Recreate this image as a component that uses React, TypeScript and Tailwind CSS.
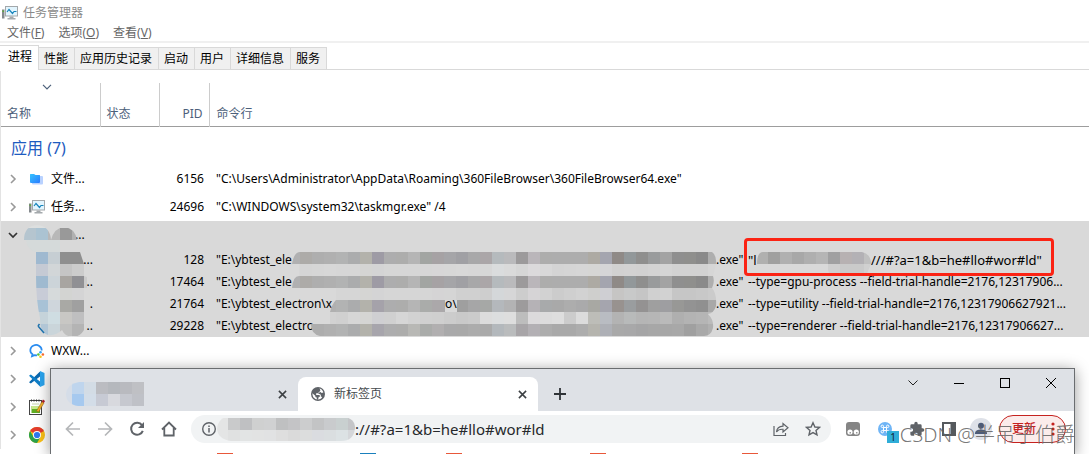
import React from "react";

const uiFont = "font-['Noto_Sans','Noto_Sans_CJK_SC',sans-serif]";

const tabs = ["进程", "性能", "应用历史记录", "启动", "用户", "详细信息", "服务"];

const menus = [
  { label: "文件", key: "F" },
  { label: "选项", key: "O" },
  { label: "查看", key: "V" },
];

function MonitorIcon() {
  return (
    <svg width="18" height="16" viewBox="0 0 18 16" className="shrink-0">
      <rect x="1" y="4.500" width="2.500" height="9" fill="#84898d" />
      <rect x="1.500" y="5.500" width="1.500" height="1.500" fill="#5fae35" />
      <rect x="4.500" y="1.500" width="12" height="9.500" fill="#e2f5fe" stroke="#a3a8ab" />
      <path d="M6 7L8 4.500L11.500 8.500L13 6.500H15.500" fill="none" stroke="#1684bb" strokeWidth="1.200" />
      <path d="M8.500 11.500h4v1.500h2v1.500H6.500v-1.500h2z" fill="#a5aaad" />
    </svg>
  );
}

function FolderIcon() {
  return (
    <svg width="18" height="16" viewBox="0 0 18 16" className="shrink-0">
      <defs>
        <linearGradient id="folder" x1="0" y1="0" x2="1" y2="1">
          <stop offset="0" stopColor="#35c4ff" />
          <stop offset="1" stopColor="#2a7bff" />
        </linearGradient>
      </defs>
      <rect x="4" y="5" width="11" height="8.500" rx="1" fill="#b9d2ff" />
      <path d="M2 3.500q0-.5.5-.5H6l1.500 1H11.500q.5 0 .5.5V11q0 1-1 1H3q-1 0-1-1z" fill="url(#folder)" />
    </svg>
  );
}

function ChatIcon() {
  return (
    <svg width="18" height="16" viewBox="0 0 18 16" className="shrink-0">
      <path d="M13.700 7.500A5.700 5.200 0 1 0 4.500 11.300L4 13.200L6.500 12.100L9 12.300" fill="none" stroke="#2a8cf0" strokeWidth="1.700" />
      <circle cx="12.500" cy="9.300" r="1.300" fill="#35a7f5" />
      <circle cx="14.900" cy="11.500" r="1.300" fill="#f5672e" />
      <circle cx="12.500" cy="13.700" r="1.300" fill="#f8c51c" />
      <circle cx="10.400" cy="11.500" r="1.300" fill="#54c438" />
    </svg>
  );
}

function CodeIcon() {
  return (
    <svg width="18" height="16" viewBox="0 0 18 16" className="shrink-0">
      <path d="M12 0v5.500L2.800 12.500L1 11.300L12 .5z" fill="#0a69b0" />
      <path d="M12 16v-5.500L2.800 3.500L1 4.700L12 15.500z" fill="#0f7fc9" />
      <path d="M12 0L16.500 2v12l-4.500 2z" fill="#2aa4ee" />
    </svg>
  );
}

function NoteIcon() {
  return (
    <svg width="18" height="18" viewBox="0 0 18 18" className="shrink-0">
      <rect x="1.500" y="2.500" width="12" height="14" fill="#fff" stroke="#444" />
      <path d="M3.500 1.500v2M6 1.500v2M8.500 1.500v2M11 1.500v2" stroke="#333" strokeWidth="1" />
      <path d="M4 6h7" stroke="#c4d6a8" />
      <rect x="3.500" y="8" width="8.500" height="7" fill="#5fae22" />
      <rect x="3.500" y="8" width="8.500" height="3" fill="#c9e88c" />
      <path d="M8.500 13L14 3.500L16 5L10.500 14z" fill="#f3b02a" stroke="#8c5a12" strokeWidth=".5" />
      <path d="M13.700 3.500L15 1.500L17 3L15.900 5z" fill="#b3202a" />
    </svg>
  );
}

function ChromeIcon() {
  return (
    <svg width="18" height="16" viewBox="0 0 18 16" className="shrink-0">
      <circle cx="9" cy="8" r="8" fill="#fbc116" />
      <path d="M9 8L2.070 4A8 8 0 0 1 15.930 4z" fill="#e33b2e" />
      <path d="M2.070 4A8 8 0 0 0 9 16L12.460 10L5.540 10z" fill="#2ba24c" />
      <circle cx="9" cy="8" r="4" fill="#fff" />
      <circle cx="9" cy="8" r="3.100" fill="#2f78ee" />
    </svg>
  );
}

function Chevron({ open = false }: { open?: boolean }) {
  return (
    <button type="button" aria-label={open ? "折叠" : "展开"} className="flex size-4 shrink-0 items-center justify-center">
      <svg width="10" height="10" viewBox="0 0 10 10" fill="none">
        {open ? (
          <path d="M1 3l4 4 4-4" stroke="#333" strokeWidth="1.700" />
        ) : (
          <path d="M3 1l4 4-4 4" stroke="#999" strokeWidth="1.600" />
        )}
      </svg>
    </button>
  );
}

type AppRowProps = { icon?: React.ReactNode; name: React.ReactNode; pid?: string; command?: string; open?: boolean };

function AppRow({ icon, name, pid, command, open }: AppRowProps) {
  return (
    <tr className={open ? "h-7 bg-[#d9d9d9]" : "h-7"}>
      <td className="p-0">
        <div className="flex items-center pl-1">
          <Chevron open={open} />
          <span className="ml-[7px] flex w-[23px] shrink-0">{icon}</span>
          <span className="whitespace-nowrap">{name}</span>
        </div>
      </td>
      <td className="p-0" />
      <td className="p-0 pr-[5px] text-right">{pid}</td>
      <td className="p-0 pl-[7px] whitespace-nowrap">{command}</td>
    </tr>
  );
}

type ChildRowProps = { dots: string; pid: string; head: string; middle?: string; args: React.ReactNode };

function ChildRow({ dots, pid, head, middle, args }: ChildRowProps) {
  return (
    <tr className="h-[22px] bg-[#d9d9d9]">
      <td className="p-0 pr-[7px] text-right">{dots}</td>
      <td className="p-0" />
      <td className="p-0 pr-[5px] text-right">{pid}</td>
      <td className="overflow-hidden p-0 pl-[7px]">
        <div className="flex whitespace-pre">
          <span className="w-[229px] shrink-0">{head}</span>
          <span className="w-[271px] shrink-0">{middle}</span>
          <span className="w-8 shrink-0">.exe"</span>
          {args}
        </div>
      </td>
    </tr>
  );
}

const CELL = 12;

function Cells({ x, y, colors }: { x: number; y: number; colors: string }) {
  return (
    <>
      {colors.split(" ").map((c, i) => (
        <rect key={i} x={x + i * CELL} y={y} width={CELL} height={CELL} fill={"#" + c} />
      ))}
    </>
  );
}

const bandDark =
  "b0b0b1 adaba8 aeaeae b0b0b0 b2b3b3 abacad b3b2ab 9e9ba5 adadae adadac b5b5b5 a2a5a2 a6a2a4 a5a5a8 a0a0a4 a8a8a9 aba6a8 b5babd bababc 9c9a9b bab6ba adadac adadad adadad adadad adaaa3 a4a5af 8f8a87 92989a 8f8f8e 999b9c a3a3a3 8f8f8f 8f8f8d 8a8a8a aeaeae";
const bandMid =
  "b0b0b1 adaba8 aeaeae b0b0b0 b2b3b3 abacad b3b2ab a5a2aa adadae adadac b5b5b5 aaacaa aba8aa a9a9aa 9f9f9f a6a6a7 a6a8a6 b4b8bc b3b3b4 9d9b9c b5b2b6 a8aaab a9a9a9 adadad aaaaab a8a8a3 a5a5ae 98928f 9a9d9f 949292 9f9f9f 9e9ea1 989896 939393 909090 a8a8a8";
const bandSoft =
  "b0b0b1 adadad adadad b0b0b0 b2b3b3 abacad b3b2ab a7a5ac adadae adadac b8b8b5 aaacaa b1afb0 a9a9aa a9a9a9 acacac aaaaaa b3b8bc babcbd a8a5a8 b3b0b4 adadad a9a9a9 a9a9a9 adadad b5b4ae aeb0b6 a9a9a9 a8a8a9 a5a5a6 a7a7a7 a7a7a7 a8a8a8 a0a0a0 a9a9a9 b0b0b0";
const lightTop =
  "d6d6d6 d5d5d5 d6d6d6 d7d7d7 d6d6d6 d6d6d6 d5d5d3 d4d4d5 d6d6d6 d6d6d6 d6d6d6 d6d6d6 d7d6d7 d7d7d7 d8d8d8 d7d7d7 d7d7d7 dadcdd dadada d6d6d6 dcdadc d8d8d8 d4d4d4 d5d5d5 d6d6d6 d6d6d4 d5d5d7 d1d1d1 d2d2d2 d1d1d1 d3d3d3 d5d5d5 d2d2d2 d2d2d2 d2d2d2 d6d6d6";
const lightMiddle =
  "d6d6d6 d5d5d5 d6d6d6 d7d7d7 d6d6d6 d6d6d6 d5d5d3 d4d4d5 d6d6d6 d6d6d6 d6d6d6 d6d6d6 d5d4d5 d5d5d5 d0d0d0 d0d0d0 cecece d4d7d9 d6d6d7 cdcdcd d6d4d6 d2d2d2 cccccc cfcfcf d2d2d2 cfcfcd cfcfd3 c6c5c4 c8c9c9 c5c5c5 d0d0d0 d2d2d2 c6c6c6 c6c6c6 c8c8c8 cbcbcb";
const lightBottom =
  "d0d0d0 d0d0d0 d2d2d2 d2d2d2 d0d0d0 d6d6d6 d5d5d3 cfcfd2 d0d0d0 d6d6d6 d2d2d2 d0d0d0 cfcfcf cccccc c9c9c9 cbcbcb dcdcdc dcdedf dedede bdbdbd dcdadc dcdcdc dedede cccccc dcdcdc bdbdb8 b9bcc2 b3b3b3 b8baba b5b5b5 b6b6b6 bababa afafaf b3b3b3 b5b5b5 bbbbbb";

function ProcessMosaic() {
  return (
    <svg
      aria-hidden="true"
      width="880"
      height="120"
      viewBox="0 220 880 120"
      className="pointer-events-none absolute left-0 top-[220px]"
    >
      <defs>
        <clipPath id="names">
          <path d="M24 240Q24 226 37 225Q50 226 51 240zM51 240Q54 228 64 227Q75 228 77 240zM36 252H80L84 264V276L87 277V288H84V330Q80 337 73 337Q65 337 62 330Q56 336 48 335Q40 333 40 318Q36 300 36 276z" />
        </clipPath>
        <clipPath id="paths">
          <path
            clipRule="evenodd"
            d="M292 264Q294 252 300 252H712Q717 256 716 264L713 276Q715 282 712 288Q717 294 716 306Q714 313 708 314Q714 320 713 328Q711 336 704 336H320Q311 334 311 324H330V312Q332 304 336 300V288H292Q293 276 299 276V264zM445 300H457V312H445z"
          />
        </clipPath>
        <clipPath id="argument">
          <path d="M757 264Q757 252 763 252H862Q871 254 871 264L866 276H830L826 264z" />
        </clipPath>
      </defs>
      <path d="M26 240H60V252H36Q27 250 26 240z" fill="#d5dada" />
      <g clipPath="url(#names)">
        <Cells x={24} y={216} colors="dddfdf dddfdf d9d9d9 d9d9d9 d9d9d9" />
        <Cells x={24} y={228} colors="b5c5cf abc3d2 b8b8b8 999999 b0b0b0" />
        <Cells x={36} y={252} colors="9fb9d0 c6ced3 8f8f8f 8f8f8f" />
        <Cells x={36} y={264} colors="c5cad4 d2d6d8 c5c5c5 cccccc" />
        <Cells x={36} y={276} colors="9fbad0 ccd4d9 a8a5a1 909094 cbcbcb" />
        <Cells x={36} y={288} colors="c8ccd7 d6dadb d3d4d2 d4d4d5" />
        <Cells x={36} y={300} colors="a8c2d6 cfd6dc a9a9a5 a0a0a0" />
        <Cells x={36} y={312} colors="c5d3da cfdde2 c8c7c4 bfbfc0" />
        <Cells x={36} y={324} colors="b1c6d6 cad5da c0c0bf b4b4b4" />
        <Cells x={36} y={336} colors="e0e5e8 e0e5e8 e6e6e6 e0e0e0" />
      </g>
      <path d="M38 326l1.500-2M38 326l6 7" stroke="#1f72ad" strokeWidth="1.500" fill="none" />
      <g clipPath="url(#paths)">
        <Cells x={288} y={252} colors={bandDark} />
        <Cells x={288} y={264} colors={lightTop} />
        <Cells x={288} y={276} colors={bandDark} />
        <Cells x={288} y={288} colors={lightMiddle} />
        <Cells x={288} y={300} colors={bandMid} />
        <Cells x={288} y={312} colors={lightBottom} />
        <Cells x={288} y={324} colors={bandSoft} />
      </g>
      <g clipPath="url(#argument)">
        <Cells x={756} y={252} colors="b0b0af a0a09f b0b0b0 a8a8a8 afafaf b5b5b5 a0a0a1 b7b1b2 b3b1b5 c0c0c0" />
        <Cells x={756} y={264} colors="d9d9d9 d9d9d9 d9d9d9 d9d9d9 d9d9d9 d9d9d9 cfcfcf cacaca cacaca d0d0d0" />
      </g>
    </svg>
  );
}

function CloseGlyph() {
  return (
    <svg width="9" height="9" viewBox="0 0 10 10" stroke="currentColor" strokeWidth="1.700" fill="none">
      <path d="M1 1l8 8M9 1l-8 8" />
    </svg>
  );
}

function IconButton({ label, children }: { label: string; children: React.ReactNode }) {
  return (
    <button type="button" aria-label={label} className="flex size-8 shrink-0 items-center justify-center text-[#5f6368]">
      {children}
    </button>
  );
}

function BrowserTabs() {
  return (
    <div className="flex h-[42px] bg-[#dee1e6]">
      <div className="flex w-[247px] items-center justify-between pl-[15px] pr-2 pt-2">
        <svg width="80" height="24" viewBox="0 0 80 24" aria-hidden="true">
          <defs>
            <clipPath id="tab-title"><path d="M13 0H78V24H12Q0 22 0 12Q1 2 13 0z" /></clipPath>
          </defs>
          <g clipPath="url(#tab-title)">
            <Cells x={-6} y={0} colors="d5dde8 bfd5ed d3dce5 bbbcc1 b5b8bd b9babf bfc0c4 bfc0c5" />
            <Cells x={-6} y={12} colors="d5dde8 a6c9ef d3dde8 c7cad4 d8d9de c6c8cf bfc1c7 d2d4d9" />
          </g>
        </svg>
        <button type="button" aria-label="关闭标签页" className="flex size-4 items-center justify-center text-[#3c4043]"><CloseGlyph /></button>
      </div>
      <div className="mt-2 flex w-60 items-center rounded-t-lg bg-white pl-3 pr-2">
        <svg width="16" height="16" viewBox="0 0 16 16">
          <circle cx="8" cy="8" r="7" fill="#5f6368" />
          <path d="M9.500 2.300Q12.500 3.200 13.400 6.200Q12 7.500 11 6.600Q10.500 5.500 9 5.800L8.300 7.300H6.300Q5.500 8.300 6.500 9H9Q10.300 9.300 10 10.800H8.800Q8.500 12 8 13.700Q5 13.500 3.300 11.200Q2.300 9.500 2.400 7.200L5.300 9.800V10.600Q5.500 11.600 6.800 11.600V13.300Q10 14 12 11.800Q12 10.600 10.800 10.500V9Q10.500 7.800 8.500 8V7.300Q9.800 7 9.700 5.700Q11 5.300 9.500 2.300z" fill="#fff" />
        </svg>
        <span className="ml-2 flex-1 text-[#45494d]">新标签页</span>
        <button type="button" aria-label="关闭标签页" className="flex size-4 items-center justify-center text-[#3c4043]"><CloseGlyph /></button>
      </div>
      <button type="button" aria-label="新建标签页" className="ml-3.5 mt-2 flex size-4 items-center justify-center self-center">
        <svg width="12" height="12" viewBox="0 0 12 12"><path d="M6 0v12M0 6h12" stroke="#2f3337" strokeWidth="1.800" /></svg>
      </button>
      <div className="ml-auto flex h-7 text-black">
        <button type="button" aria-label="搜索标签页" className="flex w-[46px] items-center justify-center">
          <svg width="10" height="6" viewBox="0 0 10 6" fill="none"><path d="M.5.5L5 5L9.500.5" stroke="#222" /></svg>
        </button>
        <button type="button" aria-label="最小化" className="flex w-[46px] items-center justify-center">
          <svg width="10" height="10"><path d="M0 5.500h10" stroke="#000" /></svg>
        </button>
        <button type="button" aria-label="最大化" className="flex w-[46px] items-center justify-center">
          <svg width="10" height="10"><rect x=".5" y=".5" width="9" height="9" fill="none" stroke="#000" /></svg>
        </button>
        <button type="button" aria-label="关闭" className="flex w-[46px] items-center justify-center">
          <svg width="10" height="10"><path d="M0 0l10 10M10 0L0 10" stroke="#000" /></svg>
        </button>
      </div>
    </div>
  );
}

function AddressBar() {
  return (
    <div className="ml-1.5 flex h-7 min-w-0 flex-1 items-center rounded-full bg-[#f1f3f4] pl-2.5 pr-0.5">
      <svg width="16" height="16" viewBox="0 0 16 16" className="shrink-0">
        <circle cx="8" cy="8" r="6.300" fill="none" stroke="#5f6368" strokeWidth="1.400" />
        <path d="M8 7v4.500M8 4.500V6" stroke="#5f6368" strokeWidth="1.500" />
      </svg>
      <svg width="138" height="24" viewBox="0 0 138 24" aria-hidden="true" className="shrink-0">
        <defs>
          <clipPath id="address"><path d="M9 0H126Q138 1 138 11Q137 24 124 24H14Q1 22 0 12Q1 2 9 0z" /></clipPath>
        </defs>
        <g clipPath="url(#address)">
          <Cells x={-1} y={1} colors="e4e5e5 c9cacb bfc0c2 cfd0d0 d0d1d2 bfc0c1 c4c4c6 cccdce c3c4c5 c9cbcd c9d0d0 c4c5c8" />
          <Cells x={-1} y={13} colors="e4e5e5 e0e1e1 e2e4e4 e2e3e3 e1e2e3 dedede dadada dcdddd dadce0 dadee0 dce2e4 d5d7da" />
        </g>
      </svg>
      <input aria-label="地址" defaultValue="://#?a=1&b=he#llo#wor#ld" className="min-w-0 flex-1 bg-transparent text-[15px] text-[#26282b] outline-none" />
      <IconButton label="分享">
        <svg width="16" height="16" viewBox="0 0 16 16" fill="none" stroke="currentColor" strokeWidth="1.200">
          <path d="M1 5v9.500h11.500V12M3.500 11Q4 5.500 10 5.200V2.500L15 6.800L10 11V8.300Q5.500 8 3.500 11z" />
        </svg>
      </IconButton>
      <IconButton label="收藏">
        <svg width="16" height="16" viewBox="0 0 16 16" fill="none" stroke="currentColor" strokeWidth="1.400">
          <path d="M8 1.800l1.900 4.200 4.500.4-3.400 3 1 4.500L8 11.600 4 13.900l1-4.500-3.400-3 4.500-.4z" />
        </svg>
      </IconButton>
    </div>
  );
}

function BrowserToolbar() {
  return (
    <div className="flex h-9 items-center bg-white pl-1.5 pr-2">
      <IconButton label="后退">
        <svg width="16" height="16" viewBox="0 0 16 16" fill="none" stroke="#b5b7b9" strokeWidth="1.700"><path d="M15 8H2M8 1.500L1.500 8L8 14.500" /></svg>
      </IconButton>
      <IconButton label="前进">
        <svg width="16" height="16" viewBox="0 0 16 16" fill="none" stroke="#b5b7b9" strokeWidth="1.700"><path d="M1 8h13M8 1.500L14.500 8L8 14.500" /></svg>
      </IconButton>
      <IconButton label="重新加载">
        <svg width="16" height="16" viewBox="0 0 16 16"><path d="M13 4.200A6 6 0 1 0 13.800 9.800" fill="none" stroke="#5f6368" strokeWidth="2" /><path d="M15 1v6H9z" fill="#5f6368" /></svg>
      </IconButton>
      <IconButton label="主页">
        <svg width="16" height="16" viewBox="0 0 16 16" fill="none" stroke="#5f6368" strokeWidth="1.800"><path d="M1 8.500L8 1.500L15 8.500M3.300 7v7.500h9.400V7" /></svg>
      </IconButton>
      <AddressBar />
      <div className="ml-1.5 flex items-center">
        <IconButton label="扩展程序一">
          <svg width="14" height="14" viewBox="0 0 14 14"><rect width="14" height="14" rx="3" fill="#858585" /><circle cx="4" cy="10" r="2.600" fill="#fff" /><circle cx="10.300" cy="10" r="2.600" fill="#fff" /><rect x="3.500" y="10" width="1.500" height="1.500" fill="#999" /><rect x="10" y="10" width="1.500" height="1.500" fill="#999" /></svg>
        </IconButton>
        <div className="relative">
          <IconButton label="扩展程序二">
            <svg width="14" height="14" viewBox="0 0 14 14">
              <circle cx="7" cy="7" r="7" fill="#6fb5f6" />
              <path d="M5.500 5.500h3v3h-3zM5.500 5.500H4.300a1.200 1.200 0 1 1 1.200-1.200zM8.500 5.500V4.300a1.200 1.200 0 1 1 1.200 1.200zM8.500 8.500h1.200a1.200 1.200 0 1 1-1.200 1.200zM5.500 8.500v1.200a1.200 1.200 0 1 1-1.200-1.200z" fill="none" stroke="#fff" />
            </svg>
          </IconButton>
          <span className="absolute left-[18px] top-[18px] flex size-3 items-center justify-center bg-[#2fadd8] text-[10px] text-[#123]">1</span>
        </div>
        <IconButton label="扩展程序">
          <svg width="16" height="16" viewBox="0 0 24 24" fill="#5f6368"><path d="M20.500 11H19V7a2 2 0 0 0-2-2h-4V3.500a2.500 2.500 0 0 0-5 0V5H4a2 2 0 0 0-2 2v3.800h1.500a2.700 2.700 0 0 1 0 5.400H2V20a2 2 0 0 0 2 2h3.800v-1.500a2.700 2.700 0 0 1 5.400 0V22H17a2 2 0 0 0 2-2v-4h1.500a2.500 2.500 0 0 0 0-5z" /></svg>
        </IconButton>
        <IconButton label="侧边栏">
          <svg width="14" height="14" viewBox="0 0 14 14"><rect x="1" y="1" width="12" height="12" fill="none" stroke="#55595d" strokeWidth="2" /><rect x="8.500" y="1" width="4.500" height="12" fill="#55595d" /></svg>
        </IconButton>
        <IconButton label="个人资料">
          <svg width="22" height="22" viewBox="0 0 22 22"><circle cx="11" cy="11" r="11" fill="#dee1e8" /><circle cx="11" cy="7.800" r="3" fill="#4d5b78" /><path d="M5 16v-1.500q1-3 6-3t6 3V16z" fill="#4d5b78" /></svg>
        </IconButton>
        <button type="button" className="ml-0.5 flex h-7 w-[67px] items-center justify-between rounded-full border border-[#c5221f] bg-[#fbeceb] pl-3 pr-2.5 font-medium text-[#c5221f]">
          更新
          <svg width="4" height="14" viewBox="0 0 4 14" fill="#c5221f"><circle cx="2" cy="2" r="1.600" /><circle cx="2" cy="7" r="1.600" /><circle cx="2" cy="12" r="1.600" /></svg>
        </button>
      </div>
    </div>
  );
}

function BrowserWindow() {
  return (
    <section aria-label="浏览器" className="absolute bottom-0 left-[50px] right-[14px] top-[368px] overflow-hidden border border-b-0 border-[#6a6d70] bg-white shadow-[0_2px_14px_rgba(0,0,0,0.4)]">
      <BrowserTabs />
      <BrowserToolbar />
      <svg width="720" height="12" viewBox="0 0 720 12" className="mt-[6px]" aria-hidden="true">
        <path d="M166 0h16v8h-16zM395 0h16v8h-16zM539 0h16v8h-16zM691 0h16v8h-16z" fill="#e8583a" />
        <path d="M309 0h16v8h-16z" fill="#1a80bd" />
      </svg>
    </section>
  );
}

export default function App() {
  return (
    <main className={`relative h-screen w-full overflow-hidden bg-white text-xs leading-4 text-black ${uiFont}`}>
      <header className="flex h-[23px] items-center gap-1 pl-px pt-0.5 text-[#8a8a8a]">
        <MonitorIcon />
        <h1>任务管理器</h1>
      </header>
      <nav className="flex h-[18px] items-center gap-3.5 pl-[7px] pt-0.5 text-[#666]">
        {menus.map((m) => (
          <button key={m.key} type="button">
            {m.label}(<u>{m.key}</u>)
          </button>
        ))}
      </nav>
      <div className="h-0.5 bg-[#f0f0f0]" />
      <div role="tablist" className="flex h-[27px] items-end border-b border-[#d9d9d9]">
        {tabs.map((t, i) => (
          <button
            key={t}
            type="button"
            role="tab"
            aria-selected={i === 0}
            className={
              i === 0
                ? "-mb-px h-[25px] border border-b-0 border-l-0 border-[#d9d9d9] bg-white pb-0.5 pl-2 pr-1.5"
                : "h-[22px] border-r border-t border-[#d9d9d9] bg-[#f0f0f0] pl-[5px] pr-1.5"
            }
          >
            {t}
          </button>
        ))}
      </div>
      <div className="mt-px border-l border-[#e3e3e3]">
        <table className="w-full table-fixed border-collapse">
          <colgroup>
            <col className="w-[99px]" />
            <col className="w-[59px]" />
            <col className="w-[50px]" />
            <col />
          </colgroup>
          <thead className="text-left text-[#4c607a]">
            <tr className="h-3"><td colSpan={4} className="p-0" /></tr>
            <tr className="h-[43px] border-b border-[#9d9d9d] align-bottom">
              <th className="border-r border-[#ccc] p-0 pb-1 pl-1.5 font-normal">
                <svg width="10" height="6" viewBox="0 0 10 6" fill="none" className="mb-4 ml-[35px]"><path d="M1 .8l4 4 4-4" stroke="#4c607a" strokeWidth="1.200" /></svg>
                名称
              </th>
              <th className="border-r border-[#ccc] p-0 pb-1 pl-1.5 font-normal">状态</th>
              <th className="border-r border-[#ccc] p-0 pb-1 pr-1.5 text-right font-normal">PID</th>
              <th className="p-0 pb-1 pl-[7px] font-normal">命令行</th>
            </tr>
          </thead>
          <tbody>
            <tr className="h-[39px]">
              <td colSpan={4} className="p-0 pl-2.5 pt-1 text-base text-[#1e5bc0]">应用 (7)</td>
            </tr>
            <AppRow icon={<FolderIcon />} name="文件..." pid="6156" command={'"C:\\Users\\Administrator\\AppData\\Roaming\\360FileBrowser\\360FileBrowser64.exe"'} />
            <AppRow icon={<MonitorIcon />} name="任务..." pid="24696" command={'"C:\\WINDOWS\\system32\\taskmgr.exe" /4'} />
            <AppRow open name={<span className="pl-6">...</span>} />
            <ChildRow
              dots="..."
              pid="128"
              head={'"E:\\ybtest_ele'}
              args={
                <span className="flex text-[13px]">
                  <span className="w-[123px] shrink-0">"l</span>
                  <span>///#?a=1&amp;b=he#llo#wor#ld"</span>
                </span>
              }
            />
            <ChildRow dots=".." pid="17464" head={'"E:\\ybtest_ele'} args="--type=gpu-process --field-trial-handle=2176,12317906..." />
            <ChildRow dots="." pid="21764" head={'"E:\\ybtest_electron\\x'} middle="o\" args="--type=utility --field-trial-handle=2176,12317906627921..." />
            <ChildRow dots=".." pid="29228" head={'"E:\\ybtest_electro'} args="--type=renderer --field-trial-handle=2176,12317906627..." />
            <AppRow icon={<ChatIcon />} name="WXW..." />
            <AppRow icon={<CodeIcon />} name="" />
            <AppRow icon={<NoteIcon />} name="" />
            <AppRow icon={<ChromeIcon />} name="" />
          </tbody>
        </table>
      </div>
      <ProcessMosaic />
      <div className="absolute left-[744px] top-[238px] h-[38px] w-[310px] rounded-sm border-3 border-[#fb2314]" />
      <BrowserWindow />
      <p className="pointer-events-none absolute bottom-[5px] right-[14px] whitespace-nowrap text-xl leading-7 font-light text-[#666]/90">CSDN @半吊子伯爵</p>
    </main>
  );
}
